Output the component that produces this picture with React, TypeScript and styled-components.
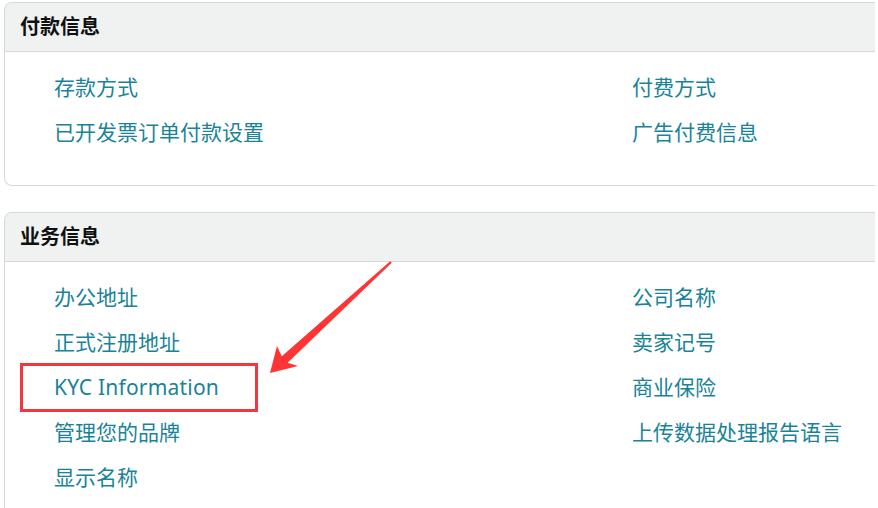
import React from 'react';
import styled, { createGlobalStyle } from 'styled-components';

const GlobalStyle = createGlobalStyle`
  html, body {
    margin: 0;
    padding: 0;
    background: #ffffff;
  }
  body {
    font-family: "Noto Sans", "Noto Sans CJK SC", sans-serif;
    overflow: hidden;
  }
`;

type Item = { label: string; highlight?: boolean };

const sections: { title: string; left: Item[]; right: Item[] }[] = [
    {
        title: '付款信息',
        left: [{ label: '存款方式' }, { label: '已开发票订单付款设置' }],
        right: [{ label: '付费方式' }, { label: '广告付费信息' }],
    },
    {
        title: '业务信息',
        left: [
            { label: '办公地址' },
            { label: '正式注册地址' },
            { label: 'KYC Information', highlight: true },
            { label: '管理您的品牌' },
            { label: '显示名称' },
        ],
        right: [
            { label: '公司名称' },
            { label: '卖家记号' },
            { label: '商业保险' },
            { label: '上传数据处理报告语言' },
        ],
    },
];

const App = () => {
    const renderItem = (item: Item) => (
        <Row key={item.label}>
            {item.highlight ? (
                <Highlight><Link $latin>{item.label}</Link></Highlight>
            ) : (
                <Link>{item.label}</Link>
            )}
        </Row>
    );

    return (
        <Page>
            <GlobalStyle />
            {sections.map((section) => (
                <Card key={section.title}>
                    <Header>{section.title}</Header>
                    <Body>
                        <Column>{section.left.map(renderItem)}</Column>
                        <Column>{section.right.map(renderItem)}</Column>
                    </Body>
                </Card>
            ))}
            {/* annotation arrow pointing at the KYC row */}
            <Arrow width="878" height="508" viewBox="0 0 878 508">
                <polygon
                    points="270,373 277,346 281.8,356.3 390.2,261.2 391.8,262.8 287.6,362.7 298,366"
                    fill="#ff3535"
                />
            </Arrow>
        </Page>
    );
};

export default App;

const Page = styled.div`
position: relative;
width: 878px;
height: 508px;
overflow: hidden;
padding-top: 2px;
box-sizing: border-box;
`;

const Card = styled.section`
width: 870px;
margin-left: 4px;
margin-bottom: 26px;
border: 1px solid #d5d9d9;
border-right: none;
border-radius: 8px 0 0 8px;
overflow: hidden;
background: #fff;
`;

const Header = styled.div`
height: 48px;
line-height: 48px;
padding-left: 15px;
background: #f0f2f2;
border-bottom: 1px solid #d5d9d9;
color: #0f1111;
font-size: 20px;
font-weight: 700;
`;

const Body = styled.div`
display: grid;
grid-template-columns: 578px 1fr;
padding: 13px 0 30px 49px;
`;

const Column = styled.div`
display: flex;
flex-direction: column;
`;

const Row = styled.div`
height: 45px;
display: flex;
align-items: center;
`;

const Link = styled.span<{ $latin?: boolean }>`
color: #1a8398;
font-size: 21px;
line-height: 45px;
white-space: nowrap;
letter-spacing: ${(p) => (p.$latin ? '0.2px' : '0')};
`;

const Highlight = styled.span`
display: inline-flex;
align-items: center;
height: 43px;
margin: -2px 0 -2px -34px;
padding: 0 36px 0 31px;
border: 3px solid #f2383c;

& > span {
    line-height: 43px;
}
`;

const Arrow = styled.svg`
position: absolute;
left: 0;
top: 0;
pointer-events: none;
`;
